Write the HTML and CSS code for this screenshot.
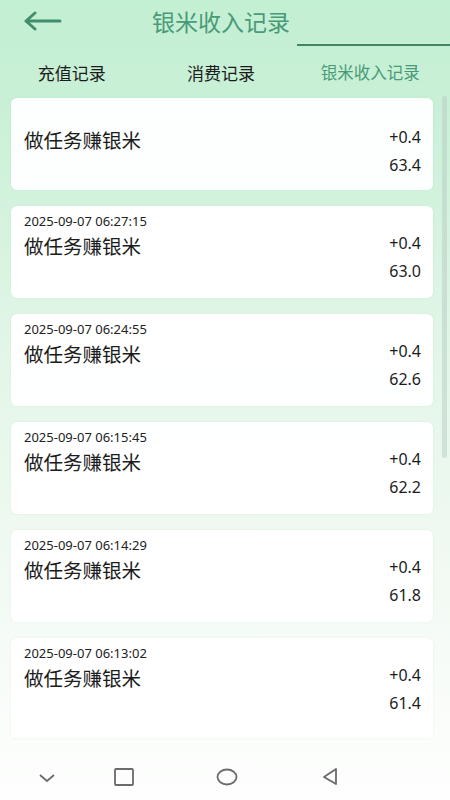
FILE: index.html
```html
<!DOCTYPE html>
<html lang="zh">
<head>
    <meta charset="UTF-8">
    <meta name="viewport" content="width=device-width, initial-scale=1.0">
    <title>银米收入记录</title>
    <link rel="stylesheet" href="styles.css">
</head>
<body>
    <div class="screen">
        <header class="top">
            <svg class="back" width="38" height="20" viewBox="0 0 38 20">
                <path d="M2 10H36M2 10L11 2M2 10L11 18" fill="none" stroke="#3f8e6d" stroke-width="3" stroke-linecap="round" stroke-linejoin="round"/>
            </svg>
            <h1>银米收入记录</h1>
        </header>
        <div class="indicator"><span></span></div>

        <nav class="tabs">
            <div class="tab">充值记录</div>
            <div class="tab">消费记录</div>
            <div class="tab active">银米收入记录</div>
        </nav>

        <main class="list">
            <div class="card">
                <div class="row first">
                    <span class="name">做任务赚银米</span>
                    <span class="amount">+0.4</span>
                </div>
                <div class="balance">63.4</div>
            </div>
            <div class="card">
                <div class="time">2025-09-07 06:27:15</div>
                <div class="row">
                    <span class="name">做任务赚银米</span>
                    <span class="amount">+0.4</span>
                </div>
                <div class="balance">63.0</div>
            </div>
            <div class="card">
                <div class="time">2025-09-07 06:24:55</div>
                <div class="row">
                    <span class="name">做任务赚银米</span>
                    <span class="amount">+0.4</span>
                </div>
                <div class="balance">62.6</div>
            </div>
            <div class="card">
                <div class="time">2025-09-07 06:15:45</div>
                <div class="row">
                    <span class="name">做任务赚银米</span>
                    <span class="amount">+0.4</span>
                </div>
                <div class="balance">62.2</div>
            </div>
            <div class="card">
                <div class="time">2025-09-07 06:14:29</div>
                <div class="row">
                    <span class="name">做任务赚银米</span>
                    <span class="amount">+0.4</span>
                </div>
                <div class="balance">61.8</div>
            </div>
            <div class="card last">
                <div class="time">2025-09-07 06:13:02</div>
                <div class="row">
                    <span class="name">做任务赚银米</span>
                    <span class="amount">+0.4</span>
                </div>
                <div class="balance">61.4</div>
            </div>
            <div class="scrollbar"></div>
        </main>

        <footer class="navbar">
            <svg width="20" height="12" viewBox="0 0 20 12"><path d="M3 3L10 9L17 3" fill="none" stroke="#6b6b6b" stroke-width="1.8"/></svg>
            <svg width="22" height="22" viewBox="0 0 22 22"><rect x="2" y="2" width="18" height="16" rx="1" fill="none" stroke="#6b6b6b" stroke-width="1.8"/></svg>
            <svg width="24" height="22" viewBox="0 0 24 22"><ellipse cx="12" cy="10" rx="9.5" ry="7.5" fill="none" stroke="#6b6b6b" stroke-width="1.8"/></svg>
            <svg width="20" height="22" viewBox="0 0 20 22"><path d="M15 2V17L3 10Z" fill="none" stroke="#6b6b6b" stroke-width="1.8" stroke-linejoin="round"/></svg>
        </footer>
    </div>
</body>
</html>
```

FILE: styles.css
```css
:root {
    --green: #4a9a78;
    --green-dark: #3b8767;
    --text: #1c1c1c;
    --font: "Noto Sans", "Noto Sans CJK SC", sans-serif;
}

* { margin: 0; padding: 0; box-sizing: border-box; }

body {
    width: 450px;
    height: 800px;
    overflow: hidden;
    font-family: var(--font);
    color: var(--text);
}

.screen {
    height: 800px;
    display: flex;
    flex-direction: column;
    background: linear-gradient(180deg, #c3efd3 0%, #c8f0d6 12%, #e3f6e8 45%, #f3faf4 75%, #fbfdfb 92%, #fdfefd 100%);
}

.top {
    height: 44px;
    display: flex;
    align-items: center;
    position: relative;
}

.back {
    margin-left: 24px;
    margin-top: -2px;
}

.top h1 {
    position: absolute;
    left: 0;
    right: 0;
    top: 4px;
    padding-right: 8px;
    text-align: center;
    font-size: 23px;
    font-weight: normal;
    color: var(--green);
}

.indicator {
    height: 4px;
    display: flex;
    justify-content: flex-end;
}

.indicator span {
    width: 153px;
    height: 2px;
    background: var(--green-dark);
}

.tabs {
    display: flex;
    height: 48px;
    align-items: center;
}

.tab {
    flex: 1;
    text-align: center;
    font-size: 17px;
}

.tab:first-child { padding-right: 6px; }
.tab:nth-child(2) { padding-right: 6px; }

.tab.active {
    color: var(--green);
    font-size: 16.5px;
    padding-right: 8px;
}

.list {
    flex: 1;
    position: relative;
    padding: 2px 17px 0 11px;
    display: flex;
    flex-direction: column;
    gap: 16px;
    overflow: hidden;
}

.card {
    background: rgba(255, 255, 255, 0.96);
    border-radius: 6px;
    height: 92px;
    flex-shrink: 0;
    padding: 6px 12px 0 13px;
    box-shadow: 0 0 2px rgba(120, 170, 140, 0.15);
}

.card.last {
    height: 100px;
    border-radius: 6px 6px 0 0;
}

.time {
    font-size: 13px;
    height: 18px;
    line-height: 18px;
    color: #222;
}

.row {
    display: flex;
    justify-content: space-between;
    align-items: center;
    height: 30px;
}

.row.first {
    margin-top: 20px;
}

.name {
    font-size: 19.5px;
}

.amount {
    font-size: 16px;
    margin-top: -4px;
}

.balance {
    text-align: right;
    font-size: 16px;
    line-height: 22px;
}

.scrollbar {
    position: absolute;
    right: 3px;
    top: 0;
    width: 5px;
    height: 362px;
    background: rgba(180, 200, 190, 0.45);
    border-radius: 2px;
}

.navbar {
    height: 58px;
    flex-shrink: 0;
    display: flex;
    align-items: center;
    padding: 14px 0 0 0;
}

.navbar svg:nth-child(1) { margin-left: 37px; }
.navbar svg:nth-child(2) { margin-left: 56px; }
.navbar svg:nth-child(3) { margin-left: 80px; }
.navbar svg:nth-child(4) { margin-left: 82px; }
```
